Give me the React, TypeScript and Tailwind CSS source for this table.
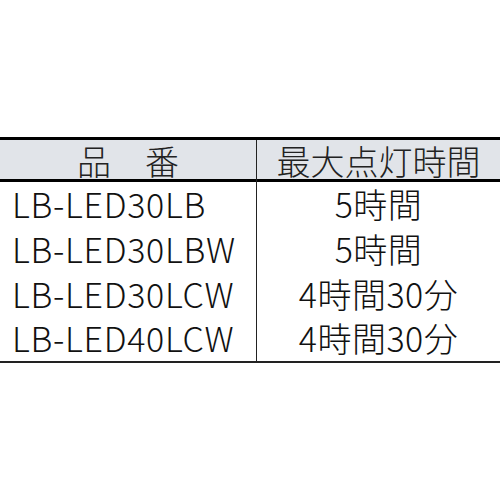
const rows = [
  { model: "LB-LED30LB", time: "5時間" },
  { model: "LB-LED30LBW", time: "5時間" },
  { model: "LB-LED30LCW", time: "4時間30分" },
  { model: "LB-LED40LCW", time: "4時間30分" },
];

export default function App() {
  return (
    <div className="flex h-[500px] w-[500px] items-center bg-white">
      <div
        className="w-full border-t-[3px] border-b-2 border-t-black border-b-[#222] font-light text-[#111]"
        style={{ fontFamily: '"Noto Sans CJK JP", sans-serif' }}
      >
        <div className="grid h-[42px] grid-cols-[257px_1fr] border-b-[3px] border-black bg-[#e1e4e9] text-[34px] leading-[42px] text-[#222]">
          <div className="border-r-[1.5px] border-[#222] text-center">品　番</div>
          <div className="text-center">最大点灯時間</div>
        </div>
        {rows.map((r) => (
          <div key={r.model} className="grid h-[44.75px] grid-cols-[257px_1fr] text-[34px] leading-[44.75px]">
            <div className="border-r-[1.5px] border-[#222] pl-[12px] tracking-[0.7px]">{r.model}</div>
            <div className="text-center tracking-[0.5px]">{r.time}</div>
          </div>
        ))}
      </div>
    </div>
  );
}
